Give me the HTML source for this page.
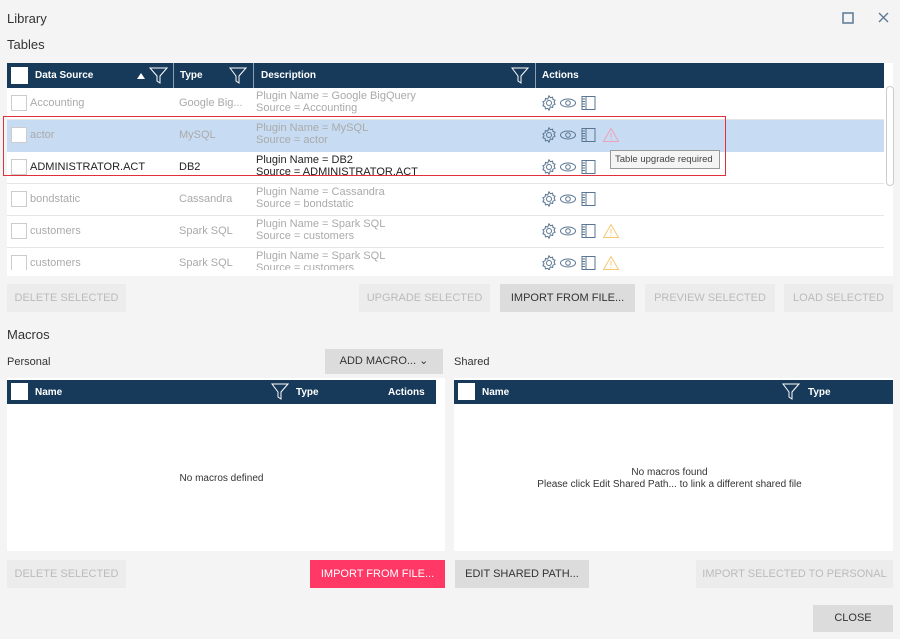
<!DOCTYPE html>
<html><head><meta charset="utf-8"><style>
*{box-sizing:border-box;margin:0;padding:0}
body{width:900px;height:639px;background:#f4f4f4;font-family:"Liberation Sans",sans-serif;position:relative;overflow:hidden;color:#333}
.a{position:absolute}
.t{font-size:13px;color:#333}
.hdr{position:absolute;background:#173a5a;color:#fff;font-size:10px;font-weight:bold}
.hdr span{position:absolute;top:7px}
.cb{position:absolute;width:16px;height:16px;border:1px solid #ccc;background:#fff}
.hcb{position:absolute;width:17px;height:17px;background:#fff;top:4px;left:4px}
.sep{position:absolute;top:0;width:1px;height:100%;background:#8aa0b5}
.row{position:absolute;left:7px;width:877px;height:32px;border-bottom:1px solid #e6e6e6;background:#fff;font-size:11px;color:#aaa}
.row .c1{position:absolute;left:23px;top:9px}
.row .c2{position:absolute;left:172px;top:9px}
.row .c3{position:absolute;left:249px;top:2px;line-height:12px}
.row .ic{position:absolute;left:535px;top:7px}
.btn{position:absolute;height:28px;background:#ececec;color:#bbb;font-size:11px;text-align:center;line-height:28px}
.btn.on{background:#dcdcdc;color:#333}
</style></head><body>
<div class="a" style="left:7px;top:11px;font-size:13px;color:#333">Library</div>
<svg class="a" style="left:842px;top:12px" width="12" height="12"><rect x="1" y="1" width="10" height="10" fill="none" stroke="#5a7895" stroke-width="1.5"/></svg>
<svg class="a" style="left:878px;top:12px" width="11" height="11"><path d="M1 1L10 10M10 1L1 10" stroke="#5a7895" stroke-width="1.3"/></svg>
<div class="a t" style="left:7px;top:37px">Tables</div>

<div class="a" style="left:7px;top:63px;width:886px;height:213px;background:#fff"></div>
<div class="hdr" style="left:7px;top:63px;width:877px;height:25px">
<div class="hcb"></div><span style="left:28px">Data Source</span>
<svg class="a" style="left:129px;top:4px" width="32" height="17"><path d="M1 12L5 6L9 12Z" fill="#fff"/><path d="M14 1H31L24 9V16L21 14V9Z" fill="none" stroke="#fff"/></svg>
<div class="sep" style="left:166px"></div><span style="left:173px">Type</span>
<svg class="a" style="left:222px;top:4px" width="18" height="17"><path d="M1 1H17L10 9V16L7 14V9Z" fill="none" stroke="#fff"/></svg>
<div class="sep" style="left:246px"></div><span style="left:254px">Description</span>
<svg class="a" style="left:504px;top:4px" width="18" height="17"><path d="M1 1H17L10 9V16L7 14V9Z" fill="none" stroke="#fff"/></svg>
<div class="sep" style="left:528px"></div><span style="left:535px">Actions</span>
</div>
<div class="a" style="left:886px;top:86px;width:8px;height:100px;border:1px solid #ccc;border-radius:4px;background:#fff"></div>

<svg width="0" height="0" style="position:absolute"><defs>
<g id="icons" fill="none" stroke="#5a7592" stroke-width="1">
<circle cx="7" cy="8" r="2.5"/><path d="M7 0.8l1.3 1.9 2.3-.6.3 2.3 2.2.9-1.1 2 1.1 2-2.2.9-.3 2.3-2.3-.6L7 15.2l-1.3-1.9-2.3.6-.3-2.3-2.2-.9 1.1-2-1.1-2 2.2-.9.3-2.3 2.3.6z"/>
<ellipse cx="26" cy="8" rx="7.5" ry="4"/><circle cx="26" cy="8" r="2.3"/>
<rect x="40" y="1.5" width="13" height="13"/><path d="M44 1.5v13M40 4h3M40 6.5h3M40 9h3M40 11.5h3"/>
</g>
<path id="warn" d="M8 1.5L15.5 14.5H0.5Z M8 6v4.5 M8 12v1" fill="none" stroke-width="1"/>
</defs></svg>

<div class="row" style="top:88px"><div class="cb" style="left:4px;top:7px"></div><span class="c1">Accounting</span><span class="c2">Google Big...</span><span class="c3">Plugin Name = Google BigQuery<br>Source = Accounting</span><svg class="ic" width="80" height="17"><use href="#icons"/></svg></div>
<div class="row" style="top:120px;background:#c7dcf2;border-bottom-color:#c7dcf2"><div class="cb" style="left:4px;top:7px"></div><span class="c1">actor</span><span class="c2">MySQL</span><span class="c3">Plugin Name = MySQL<br>Source = actor</span><svg class="ic" width="90" height="17"><use href="#icons"/><use href="#warn" x="61" stroke="#f0a0b8"/></svg></div>
<div class="row" style="top:152px;color:#222"><div class="cb" style="left:4px;top:7px"></div><span class="c1">ADMINISTRATOR.ACT</span><span class="c2">DB2</span><span class="c3">Plugin Name = DB2<br>Source = ADMINISTRATOR.ACT</span><svg class="ic" width="80" height="17"><use href="#icons"/></svg></div>
<div class="row" style="top:184px"><div class="cb" style="left:4px;top:7px"></div><span class="c1">bondstatic</span><span class="c2">Cassandra</span><span class="c3">Plugin Name = Cassandra<br>Source = bondstatic</span><svg class="ic" width="80" height="17"><use href="#icons"/></svg></div>
<div class="row" style="top:216px"><div class="cb" style="left:4px;top:7px"></div><span class="c1">customers</span><span class="c2">Spark SQL</span><span class="c3">Plugin Name = Spark SQL<br>Source = customers</span><svg class="ic" width="90" height="17"><use href="#icons"/><use href="#warn" x="61" stroke="#f5c870"/></svg></div>
<div class="row" style="top:248px;height:22px;overflow:hidden;border:none"><div class="cb" style="left:4px;top:7px"></div><span class="c1">customers</span><span class="c2">Spark SQL</span><span class="c3">Plugin Name = Spark SQL<br>Source = customers</span><svg class="ic" width="90" height="17"><use href="#icons"/><use href="#warn" x="61" stroke="#f5c870"/></svg></div>

<div class="a" style="left:3px;top:116px;width:723px;height:60px;border:1px solid #e0303c"></div>
<div class="a" style="left:610px;top:150px;width:110px;height:19px;background:#f4f4f4;border:1px solid #999;font-size:9.5px;line-height:17px;padding-left:4px;color:#444;white-space:nowrap">Table upgrade required</div>

<div class="btn" style="left:7px;top:284px;width:119px">DELETE SELECTED</div>
<div class="btn" style="left:359px;top:284px;width:131px">UPGRADE SELECTED</div>
<div class="btn on" style="left:500px;top:284px;width:135px">IMPORT FROM FILE...</div>
<div class="btn" style="left:645px;top:284px;width:130px">PREVIEW SELECTED</div>
<div class="btn" style="left:784px;top:284px;width:109px">LOAD SELECTED</div>

<div class="a t" style="left:7px;top:327px">Macros</div>
<div class="a" style="left:7px;top:356px;font-size:11px">Personal</div>
<div class="btn on" style="left:325px;top:349px;width:118px;height:25px;line-height:25px">ADD MACRO... &#8964;</div>
<div class="a" style="left:454px;top:356px;font-size:11px">Shared</div>

<div class="a" style="left:7px;top:378px;width:438px;height:173px;background:#fff"></div>
<div class="hdr" style="left:7px;top:380px;width:429px;height:24px">
<div class="hcb" style="top:3px"></div><span style="left:28px">Name</span>
<svg class="a" style="left:264px;top:3px" width="18" height="17"><path d="M1 1H17L10 9V16L7 14V9Z" fill="none" stroke="#fff"/></svg>
<span style="left:289px">Type</span><span style="left:381px">Actions</span></div>
<div class="a" style="left:7px;top:473px;width:429px;text-align:center;font-size:10px;color:#333">No macros defined</div>

<div class="a" style="left:454px;top:378px;width:439px;height:173px;background:#fff"></div>
<div class="hdr" style="left:454px;top:380px;width:439px;height:24px">
<div class="hcb" style="top:3px"></div><span style="left:28px">Name</span>
<svg class="a" style="left:328px;top:3px" width="18" height="17"><path d="M1 1H17L10 9V16L7 14V9Z" fill="none" stroke="#fff"/></svg>
<span style="left:354px">Type</span></div>
<div class="a" style="left:454px;top:467px;width:431px;text-align:center;font-size:10px;color:#333;line-height:12px">No macros found<br>Please click Edit Shared Path... to link a different shared file</div>

<div class="btn" style="left:7px;top:560px;width:119px">DELETE SELECTED</div>
<div class="btn" style="left:310px;top:560px;width:135px;background:#ff3866;color:#fff">IMPORT FROM FILE...</div>
<div class="btn on" style="left:455px;top:560px;width:134px">EDIT SHARED PATH...</div>
<div class="btn" style="left:696px;top:560px;width:197px">IMPORT SELECTED TO PERSONAL</div>
<div class="btn on" style="left:813px;top:605px;width:80px;height:27px;line-height:27px">CLOSE</div>
</body></html>
